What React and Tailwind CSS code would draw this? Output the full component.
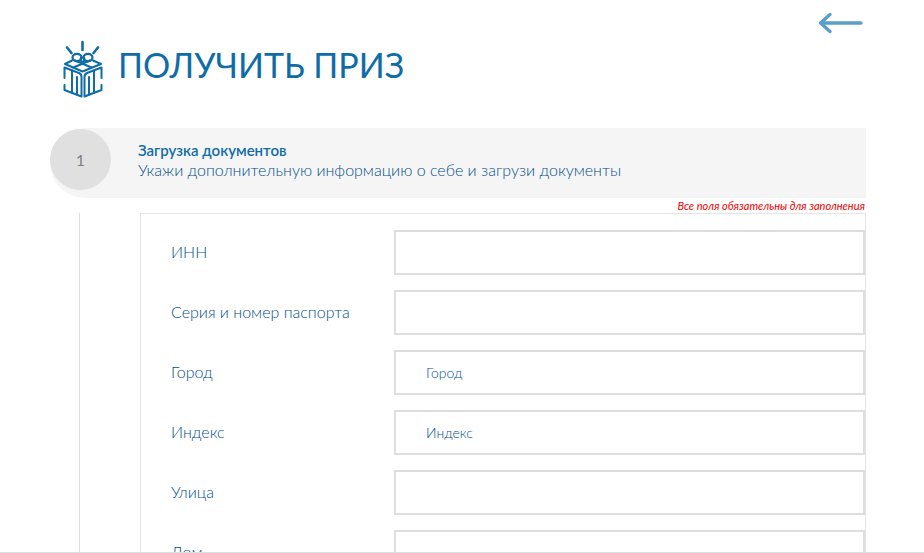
import React, { useState } from 'react';

const FIELDS = [
    { id: 'inn', label: 'ИНН' },
    { id: 'passport', label: 'Серия и номер паспорта' },
    { id: 'city', label: 'Город', placeholder: 'Город' },
    { id: 'zip', label: 'Индекс', placeholder: 'Индекс' },
    { id: 'street', label: 'Улица' },
    { id: 'house', label: 'Дом' },
];

function GiftIcon() {
    return (
        <svg className="w-10 h-[58px]" viewBox="0 0 40 58" fill="none" stroke="#0f6ca6" strokeWidth="2" strokeLinecap="round" strokeLinejoin="round" aria-hidden="true">
            <path strokeWidth="2.6" d="M19.5 2v8M4 7.500l4.500 5.500M35 7.500l-4.500 5.500" />
            {/* bow */}
            <ellipse cx="14" cy="17.500" rx="4.500" ry="3.600" strokeWidth="2.2" />
            <ellipse cx="25" cy="17.500" rx="4.500" ry="3.600" strokeWidth="2.2" />
            <circle cx="19.500" cy="19.500" r="2" />
            {/* lid */}
            <path d="M9 20.500 2 24l17.500 7.500L38 24l-8-3.500" />
            <path d="M10.500 27.500 27 20.500M28.500 27.500 12 20.500" />
            {/* sides */}
            <path d="M1.500 38V27.500L16 33q2.500 1 2.500 4V56.500L1.500 50v-5" />
            <path d="M38.500 38V27.500L24 33q-2.500 1-2.500 4V56.500l17-6.500v-5" />
            <path d="M9 30.500v22M14 37v17.500M26 37v17.500M31 30.500v22" />
        </svg>
    )
}

function BackArrow() {
    return (
        <svg className="w-[45px] h-[22px]" viewBox="0 0 45 22" fill="none" stroke="#5a9fc9" strokeWidth="3.4" strokeLinecap="round" strokeLinejoin="round" aria-hidden="true">
            <path d="M43 11H3M12 2.500 2.500 11l9.500 8.500" />
        </svg>
    )
}

function StepHeader({ number, title, text }) {
    return (
        <div className="flex items-start h-[70px] rounded-l-full bg-[#f5f5f5]">
            <div className="flex items-center justify-center shrink-0 w-[61px] h-[61px] mt-px rounded-full bg-[#e0e0e0] text-base text-[#808080]">{number}</div>
            <div className="pt-3 pl-[27px]">
                <h2 className="text-[15px] leading-5 font-semibold text-[#0f6ca6]">{title}</h2>
                <p className="text-base leading-5 font-light">{text}</p>
            </div>
        </div>
    )
}

function FieldRow({ field, value, onChange }) {
    return (
        <div className="flex items-center h-[45px]">
            <label htmlFor={field.id} className="w-[223px] shrink-0 pb-0.5 text-base font-light">{field.label}</label>
            <input
                id={field.id}
                type="text"
                className="flex-1 min-w-0 h-full px-[30px] border-2 border-[#dedede] bg-white text-sm font-light placeholder:text-[#04508a] placeholder:opacity-100 outline-none"
                placeholder={field.placeholder}
                value={value}
                onChange={(e) => onChange(field.id, e.target.value)}
            />
        </div>
    )
}

export default function App() {
    const [values, setValues] = useState({});

    const handleChange = (id, value) => {
        setValues({ ...values, [id]: value });
    }

    return (
        <div className="h-screen overflow-hidden border-b border-[#dedede] bg-white pl-[50px] pr-[58px] font-['Lato','Noto_Sans',sans-serif] text-[#04508a]">
            <div className="flex justify-end h-8 pt-3 pr-[3px]">
                <button type="button" aria-label="Назад" className="h-[22px] cursor-pointer">
                    <BackArrow />
                </button>
            </div>
            <header className="flex items-start gap-[15px] h-16 mt-2 pl-[13px]">
                <GiftIcon />
                <h1 className="pt-[5px] text-[34px] leading-10 text-[#0f6ca6]">ПОЛУЧИТЬ ПРИЗ</h1>
            </header>
            <div className="mt-6">
                <StepHeader number="1" title="Загрузка документов" text="Укажи дополнительную информацию о себе и загрузи документы" />
            </div>
            <p className="h-[15px] pr-px text-right text-[11px] leading-4 italic text-[#f00000]">Все поля обязательны для заполнения</p>
            <div className="ml-[29px] border-l border-[#dedede]">
                <form className="flex flex-col gap-[15px] ml-[60px] pt-4 pb-4 pl-[30px] border border-[#e4e4e4]">
                    {FIELDS.map((field) => (
                        <FieldRow key={field.id} field={field} value={values[field.id] || ''} onChange={handleChange} />
                    ))}
                </form>
            </div>
        </div>
    )
}
